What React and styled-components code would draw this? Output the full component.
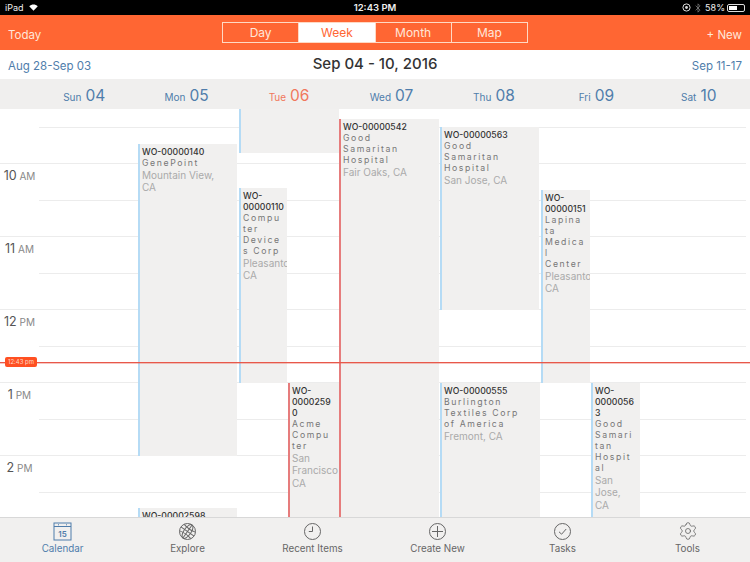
import styled, { createGlobalStyle } from 'styled-components';
import { Bluetooth, Settings } from 'lucide-react';

const FONT = `Inter, 'Liberation Sans', sans-serif`;
const ORANGE = '#ff6633';
const BLUE = '#4f7dab';
const HOUR = 36.5;

const GlobalStyle = createGlobalStyle`
    html, body {
        margin: 0;
        padding: 0;
        background: #fff;
    }
    body {
        font-family: ${FONT};
        -webkit-font-smoothing: antialiased;
    }
    * {
        box-sizing: border-box;
    }
`

const DAYS = [
    { name: 'Sun', num: '04' },
    { name: 'Mon', num: '05' },
    { name: 'Tue', num: '06', today: true },
    { name: 'Wed', num: '07' },
    { name: 'Thu', num: '08' },
    { name: 'Fri', num: '09' },
    { name: 'Sat', num: '10' },
];

const SLOTS = [
    { height: 18.5 },
    { height: HOUR },
    { height: HOUR, num: '10', unit: 'AM', hour: true },
    { height: HOUR },
    { height: HOUR, num: '11', unit: 'AM', hour: true },
    { height: HOUR },
    { height: HOUR, num: '12', unit: 'PM', hour: true },
    { height: HOUR },
    { height: HOUR, num: '1', unit: 'PM', hour: true },
    { height: HOUR },
    { height: HOUR, num: '2', unit: 'PM', hour: true },
    { height: HOUR },
];

const EVENTS = [
    { id: 1, left: 138, top: 35, width: 99, height: 312, title: 'WO-00000140', customer: 'GenePoint', place: 'Mountain View,\nCA' },
    { id: 2, left: 239, top: 0, width: 100, height: 44 },
    { id: 3, left: 239, top: 79, width: 48, height: 195, title: 'WO-\n00000110', customer: 'Compu\nter\nDevice\ns Corp', place: 'Pleasanto\nCA' },
    { id: 4, left: 288, top: 274, width: 51, height: 134, late: true, title: 'WO-\n0000259\n0', customer: 'Acme\nCompu\nter', place: 'San\nFrancisco\nCA' },
    { id: 5, left: 339, top: 10, width: 100, height: 398, late: true, title: 'WO-00000542', customer: 'Good\nSamaritan\nHospital', place: 'Fair Oaks, CA' },
    { id: 6, left: 440, top: 18, width: 99, height: 183, title: 'WO-00000563', customer: 'Good\nSamaritan\nHospital', place: 'San Jose, CA' },
    { id: 7, left: 541, top: 81, width: 49, height: 193, title: 'WO-\n00000151', customer: 'Lapina\nta\nMedica\nl\nCenter', place: 'Pleasanto\nCA' },
    { id: 8, left: 440, top: 274, width: 99.5, height: 134, title: 'WO-00000555', customer: 'Burlington\nTextiles Corp\nof America', place: 'Fremont, CA' },
    { id: 9, left: 591, top: 274, width: 49, height: 134, title: 'WO-\n0000056\n3', customer: 'Good\nSamari\ntan\nHospit\nal', place: 'San\nJose,\nCA' },
    { id: 10, left: 138, top: 399, width: 99, height: 9, title: 'WO-00002598' },
];

const CalendarIcon = () => (
    <svg width='19' height='19' viewBox='0 0 19 19' fill='none' stroke={BLUE} strokeWidth='1'>
        <rect x='1' y='1' width='17' height='17' />
        <line x1='1' y1='4.5' x2='18' y2='4.5' />
        <line x1='5' y1='2.8' x2='6' y2='2.8' />
        <line x1='13' y1='2.8' x2='14' y2='2.8' />
        <text x='9.5' y='14.5' textAnchor='middle' fontSize='8' fontWeight='600' fill={BLUE} stroke='none' fontFamily={FONT}>15</text>
    </svg>
);

const GlobeIcon = () => (
    <svg width='19' height='19' viewBox='0 0 19 19' fill='none' stroke='#666' strokeWidth='1'>
        <circle cx='9.5' cy='9.5' r='8' />
        <g transform='rotate(35 9.5 9.5)'>
            <ellipse cx='9.5' cy='9.5' rx='3.6' ry='8' />
            <line x1='9.5' y1='1.5' x2='9.5' y2='17.5' />
            <line x1='1.5' y1='9.5' x2='17.5' y2='9.5' />
            <path d='M2.7 5.5 Q9.5 7.4 16.3 5.5' />
            <path d='M2.7 13.5 Q9.5 11.6 16.3 13.5' />
        </g>
    </svg>
);

const ClockIcon = () => (
    <svg width='19' height='19' viewBox='0 0 19 19' fill='none' stroke='#666' strokeWidth='1'>
        <circle cx='9.5' cy='9.5' r='8' />
        <path d='M9.5 4.5 V9.5 H5.8' />
    </svg>
);

const PlusIcon = () => (
    <svg width='19' height='19' viewBox='0 0 19 19' fill='none' stroke='#666' strokeWidth='1'>
        <circle cx='9.5' cy='9.5' r='8' />
        <path d='M9.5 4 V15 M4 9.5 H15' />
    </svg>
);

const CheckIcon = () => (
    <svg width='19' height='19' viewBox='0 0 19 19' fill='none' stroke='#666' strokeWidth='1'>
        <circle cx='9.5' cy='9.5' r='8' />
        <path d='M6 9.8 L8.6 12.2 L13.2 7' />
    </svg>
);

const WifiIcon = () => (
    <svg width='9' height='7' viewBox='0 0 11 9' fill='#fff'>
        <path d='M5.5 8.6 L0 2.9 C3.2 -0.3 7.8 -0.3 11 2.9 Z' />
    </svg>
);

const RotationIcon = () => (
    <svg width='9' height='9' viewBox='0 0 9 9' fill='none' stroke='#ddd' strokeWidth='1'>
        <circle cx='4.5' cy='4.5' r='3.6' />
        <circle cx='4.5' cy='4.5' r='1.4' fill='#ddd' stroke='none' />
    </svg>
);

const TABS = [
    { label: 'Calendar', icon: <CalendarIcon />, active: true },
    { label: 'Explore', icon: <GlobeIcon /> },
    { label: 'Recent Items', icon: <ClockIcon /> },
    { label: 'Create New', icon: <PlusIcon /> },
    { label: 'Tasks', icon: <CheckIcon /> },
    { label: 'Tools', icon: <Settings size={20} strokeWidth={1} color='#666' /> },
];

export default function App() {
    return (
        <Page>
            <GlobalStyle />
            <StatusBar>
                <StatusSide>
                    iPad
                    <WifiIcon />
                </StatusSide>
                <StatusTime>12:43 PM</StatusTime>
                <StatusRight>
                    <RotationIcon />
                    <Bluetooth size={10} color='#999' strokeWidth={1.5} />
                    58%
                    <Battery><BatteryLevel /></Battery>
                </StatusRight>
            </StatusBar>

            <TopBar>
                <TopLink>Today</TopLink>
                <Segments>
                    <Segment>Day</Segment>
                    <Segment $active>Week</Segment>
                    <Segment>Month</Segment>
                    <Segment>Map</Segment>
                </Segments>
                <TopLink>+ New</TopLink>
            </TopBar>

            <DateBar>
                <DateLink>Aug 28-Sep 03</DateLink>
                <DateTitle>Sep 04 - 10, 2016</DateTitle>
                <DateLink>Sep 11-17</DateLink>
            </DateBar>

            <DayHeader>
                {DAYS.map((day) => (
                    <DayCell key={day.name} $today={day.today}>
                        <DayName>{day.name}</DayName>
                        <DayNum>{day.num}</DayNum>
                    </DayCell>
                ))}
            </DayHeader>

            <Schedule>
                {SLOTS.map((slot, i) => (
                    <Slot key={i} $height={slot.height} $hour={SLOTS[i + 1] && SLOTS[i + 1].hour}>
                        {slot.hour && (
                            <HourLabel>
                                <HourNum>{slot.num}</HourNum> {slot.unit}
                            </HourLabel>
                        )}
                    </Slot>
                ))}

                {EVENTS.map((ev) => (
                    <EventCard
                        key={ev.id}
                        $left={ev.left}
                        $top={ev.top}
                        $width={ev.width}
                        $height={ev.height}
                        $late={ev.late}
                    >
                        {ev.title && <EventTitle>{ev.title}</EventTitle>}
                        {ev.customer && <EventCustomer>{ev.customer}</EventCustomer>}
                        {ev.place && <EventPlace>{ev.place}</EventPlace>}
                    </EventCard>
                ))}

                <NowLine />
                <NowBadge>12:43 pm</NowBadge>
            </Schedule>

            <TabBar>
                {TABS.map((tab) => (
                    <Tab key={tab.label} $active={tab.active}>
                        <TabIcon>{tab.icon}</TabIcon>
                        {tab.label}
                    </Tab>
                ))}
            </TabBar>
        </Page>
    )
}

const Page = styled.div`
    width: 750px;
    height: 562px;
    display: flex;
    flex-direction: column;
    overflow: hidden;
    background: #fff;
`

const StatusBar = styled.div`
    height: 15px;
    flex: none;
    background: #000;
    color: #eee;
    font-size: 9px;
    padding: 0 5px;
    display: grid;
    grid-template-columns: 1fr auto 1fr;
    align-items: center;
`

const StatusSide = styled.div`
    display: flex;
    align-items: center;
    gap: 5px;
`

const StatusTime = styled.div`
    font-weight: 600;
    font-size: 9.5px;
`

const StatusRight = styled.div`
    display: flex;
    align-items: center;
    justify-content: flex-end;
    gap: 2px;
`

const Battery = styled.div`
    width: 18px;
    height: 8px;
    border: 1px solid #ddd;
    border-radius: 2px;
    padding: 1px;
`

const BatteryLevel = styled.div`
    width: 58%;
    height: 100%;
    background: #fff;
`

const TopBar = styled.div`
    height: 35px;
    flex: none;
    background: ${ORANGE};
    padding: 0 8px;
    display: grid;
    grid-template-columns: 1fr auto 1fr;
    align-items: center;

    & > :last-child {
        justify-self: end;
    }
`

const TopLink = styled.div`
    color: #ffe6da;
    font-size: 11.5px;
    padding-top: 5px;
`

const Segments = styled.div`
    display: flex;
    width: 306px;
    height: 21px;
    border: 1px solid #ffd9c4;
`

const Segment = styled.div`
    flex: 1;
    display: flex;
    align-items: center;
    justify-content: center;
    padding-bottom: 1px;
    font-size: 12px;
    color: ${(props) => (props.$active ? ORANGE : '#ffe6da')};
    background: ${(props) => (props.$active ? '#fff' : 'transparent')};

    & + & {
        border-left: 1px solid #ffd9c4;
    }
`

const DateBar = styled.div`
    height: 29px;
    flex: none;
    padding: 0 8px;
    display: grid;
    grid-template-columns: 1fr auto 1fr;
    align-items: center;

    & > :last-child {
        justify-self: end;
    }
`

const DateLink = styled.div`
    color: ${BLUE};
    font-size: 11.5px;
    padding-top: 2px;
`

const DateTitle = styled.div`
    color: #333;
    font-size: 15px;
    font-weight: 500;
    padding-bottom: 2px;
`

const DayHeader = styled.div`
    height: 30px;
    flex: none;
    background: #f0efee;
    padding-left: 33px;
    display: grid;
    grid-template-columns: repeat(7, 1fr);
`

const DayCell = styled.div`
    display: flex;
    align-items: baseline;
    justify-content: center;
    gap: 4px;
    padding-top: 7px;
    color: ${(props) => (props.$today ? '#f0775c' : BLUE)};
`

const DayName = styled.span`
    font-size: 10px;
`

const DayNum = styled.span`
    font-size: 15.5px;
`

const Schedule = styled.div`
    position: relative;
    flex: 1;
    min-height: 0;
    overflow: hidden;
`

const Slot = styled.div`
    height: ${(props) => props.$height}px;
    margin-left: ${(props) => (props.$hour ? 0 : 39)}px;
    margin-right: 4px;
    border-bottom: 1px solid #ececec;
    position: relative;
`

const HourLabel = styled.div`
    position: absolute;
    left: -39px;
    top: 4px;
    width: 39px;
    text-align: center;
    font-size: 10px;
    color: #888;
    white-space: nowrap;
`

const HourNum = styled.span`
    font-size: 12.5px;
    color: #555;
`

const EventCard = styled.div`
    position: absolute;
    left: ${(props) => props.$left}px;
    top: ${(props) => props.$top}px;
    width: ${(props) => props.$width}px;
    height: ${(props) => props.$height}px;
    padding: 3px 0 0 2px;
    background: #f1f0ef;
    border-left: 2px solid ${(props) => (props.$late ? '#e67c7c' : '#b5dbf5')};
    overflow: hidden;
    white-space: pre;
`

const EventTitle = styled.div`
    font-size: 8.7px;
    line-height: 11px;
    font-weight: 500;
    color: #333;
`

const EventCustomer = styled.div`
    font-size: 8.7px;
    line-height: 11px;
    letter-spacing: 1.6px;
    color: #777;
`

const EventPlace = styled.div`
    font-size: 10px;
    line-height: 12.3px;
    color: #aaa;
`

const NowLine = styled.div`
    position: absolute;
    left: 0;
    right: 0;
    top: 253px;
    height: 1px;
    background: #e8584a;
    box-shadow: 0 1px 0 rgba(232, 88, 74, 0.35);
`

const NowBadge = styled.div`
    position: absolute;
    left: 5px;
    top: 248px;
    width: 32px;
    height: 10px;
    border-radius: 2px;
    background: #ff5022;
    color: #ffd9c4;
    font-size: 6px;
    line-height: 10px;
    text-align: center;
`

const TabBar = styled.div`
    height: 45px;
    flex: none;
    background: #f1f0ef;
    border-top: 1px solid #d8d8d8;
    display: grid;
    grid-template-columns: repeat(6, 1fr);
`

const Tab = styled.div`
    display: flex;
    flex-direction: column;
    align-items: center;
    font-size: 9.8px;
    color: ${(props) => (props.$active ? BLUE : '#666')};
`

const TabIcon = styled.div`
    height: 20px;
    margin: 3px 0 2px;
    display: flex;
    align-items: center;
`
